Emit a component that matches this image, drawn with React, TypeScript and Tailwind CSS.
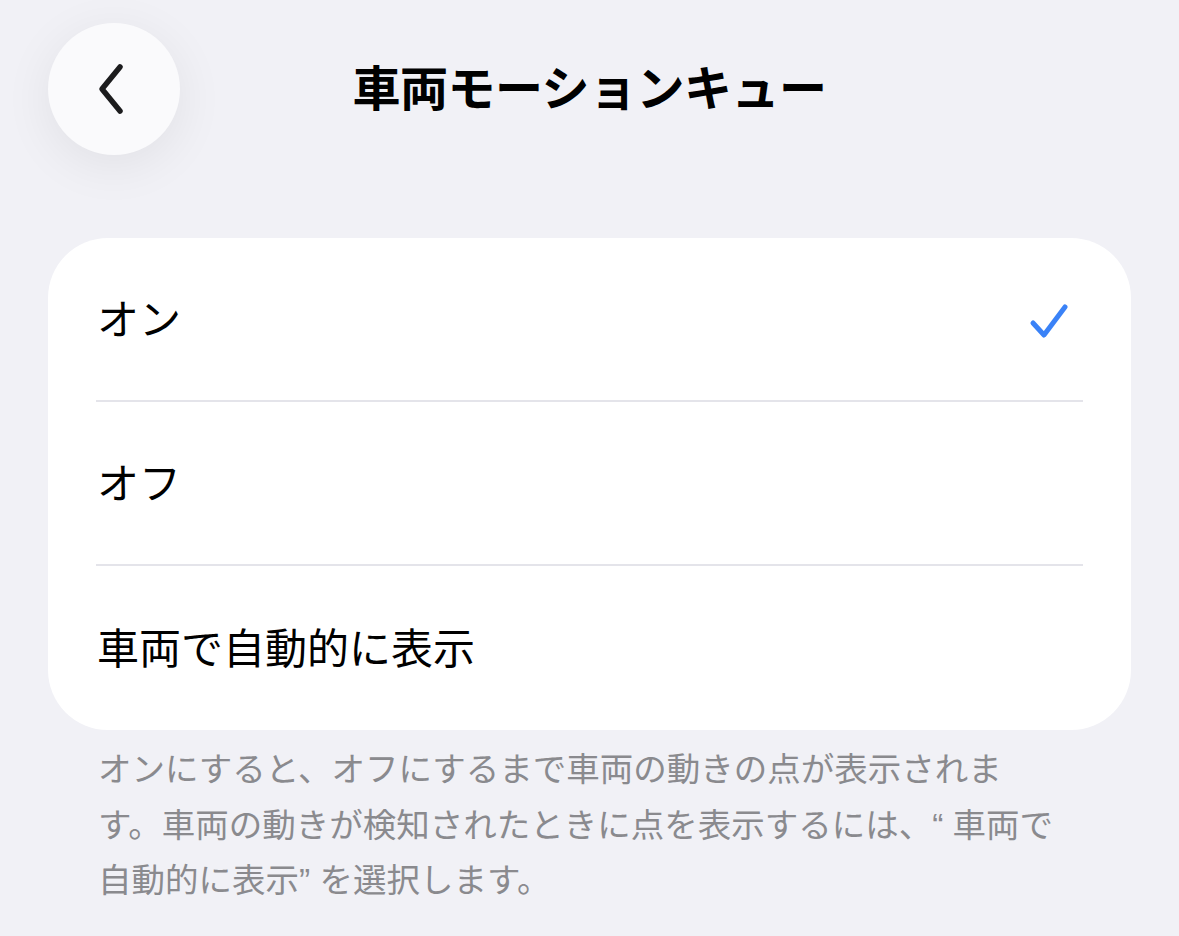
import React from 'react';

const options = ['オン', 'オフ', '車両で自動的に表示'];

const jp = { fontFamily: '"Liberation Sans", "Noto Sans CJK JP", sans-serif' };

const App: React.FC = () => {
  const selected = 0;

  return (
    <div className="min-h-[936px] w-[1179px] bg-[#f1f1f6] text-black" style={jp}>
      {/* Header */}
      <div className="relative flex h-[178px] items-start">
        <button className="ml-[48px] mt-[23px] flex h-[132px] w-[132px] items-center justify-center rounded-full bg-[#fafafc] shadow-[0_10px_50px_rgba(0,0,0,0.07)]">
          <svg width="40" height="60" viewBox="0 0 40 60" fill="none" className="-ml-[4px]">
            <path d="M28 8 L10 30 L28 52" stroke="#1c1c1e" strokeWidth="5.5" strokeLinecap="round" strokeLinejoin="round" />
          </svg>
        </button>
        <h1 className="absolute left-0 right-0 top-[61px] text-center text-[48px] font-bold leading-[58px] tracking-[-0.5px]">
          車両モーションキュー
        </h1>
      </div>

      {/* Options card */}
      <div className="mx-[48px] mt-[60px] rounded-[60px] bg-white">
        {options.map((label, i) => (
          <div key={label} className="px-[48px]">
            <div className={`flex h-[164px] items-center justify-between ${i < options.length - 1 ? 'border-b-2 border-[#e4e4ea]' : ''}`}>
              <span className="pl-[1px] pt-[3px] text-[42px] leading-none">{label}</span>
              {i === selected && (
                <svg width="44" height="44" viewBox="0 0 44 44" fill="none" className="mr-[12px] mt-[4px]">
                  <path d="M6 24 L17 36 L38 8" stroke="#3a82f7" strokeWidth="5" strokeLinecap="round" strokeLinejoin="round" />
                </svg>
              )}
            </div>
          </div>
        ))}
      </div>

      {/* Footer note */}
      <p className="ml-[98px] mt-[12px] w-[965px] text-[33.5px] leading-[55.5px] text-[#8a8a8e]">
        オンにすると、オフにするまで車両の動きの点が表示されます。車両の動きが検知されたときに点を表示するには、“ 車両で自動的に表示” を選択します。
      </p>
    </div>
  );
};

export default App;
